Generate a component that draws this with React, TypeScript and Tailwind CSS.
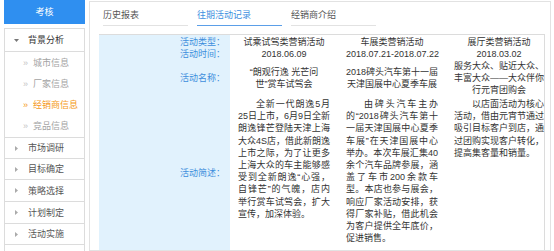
import React from 'react';

type Activity = {
  type: string;
  date: string;
  name: string[];
  desc: string[];
};

const activities: Activity[] = [
  {
    type: '试乘试驾类营销活动',
    date: '2018.06.09',
    name: ['“朗观行逸 光芒问', '世”赏车试驾会'],
    desc: [
      '全新一代朗逸5月',
      '25日上市，6月9日全新',
      '朗逸锋芒登陆天津上海',
      '大众4S店，借此新朗逸',
      '上市之际，为了让更多',
      '上海大众的车主能够感',
      '受到全新朗逸“心强，',
      '自锋芒”的气魄，店内',
      '举行赏车试驾会，扩大',
      '宣传，加深体验。',
    ],
  },
  {
    type: '车展类营销活动',
    date: '2018.07.21-2018.07.22',
    name: ['2018碑头汽车第十一届', '天津国展中心夏季车展'],
    desc: [
      '由碑头汽车主办',
      '的“2018碑头汽车第十',
      '一届天津国展中心夏季',
      '车展”在天津国展中心',
      '举办。本次车展汇集40',
      '余个汽车品牌参展，涵',
      '盖了车市200余款车',
      '型。本店也参与展会，',
      '响应厂家活动安排，获',
      '得厂家补贴，借此机会',
      '为客户提供全年底价，',
      '促进销售。',
    ],
  },
  {
    type: '展厅类营销活动',
    date: '2018.03.02',
    name: ['服务大众、贴近大众、', '丰富大众——大众伴你', '行元宵团购会'],
    desc: [
      '以店面活动为核心',
      '活动，借由元宵节通过',
      '吸引目标客户到店，通',
      '过团购实现客户转化，',
      '提高集客量和销量。',
    ],
  },
];

const subItems = ['城市信息', '厂家信息', '经销商信息', '竞品信息'];
// row heights tuned against the screenshot
const sections: [string, string][] = [
  ['市场调研', 'h-[21px]'],
  ['目标确定', 'h-[21px]'],
  ['策略选择', 'h-[22px]'],
  ['计划制定', 'h-[22px]'],
  ['活动实施', 'h-[21px]'],
];

function Sidebar(): React.ReactElement {
  return (
    <aside className="ml-[4px] flex w-[81px] shrink-0 flex-col">
      <div className="flex h-[24px] items-center justify-center bg-[#2f8ff0] text-white">考核</div>
      <div className="mt-[4px] flex-1 border-x border-t border-[#dcdcdc]">
        <div className="flex h-[23px] items-center border-b border-[#dcdcdc] pl-[9px] text-[#333]">
          <svg width="5" height="3" viewBox="0 0 5 3">
            <path d="M0 0h5L2.5 3z" fill="#777" />
          </svg>
          <span className="ml-[9px]">背景分析</span>
        </div>
        <div className="pb-[1px]">
          {subItems.map((item) => {
            const active = item === '经销商信息';
            return (
              <div
                key={item}
                className={`flex h-[21px] items-center pl-[18px] ${active ? 'text-[#f59a1b]' : 'text-[#a3a3a3]'}`}
              >
                <span className={active ? 'text-[#f59a1b]' : 'text-[#c4c4c4]'}>»</span>
                <span className="ml-[5px]">{item}</span>
              </div>
            );
          })}
        </div>
        {sections.map(([label, h]) => (
          <div key={label} className={`flex ${h} items-center border-t border-[#dcdcdc] pl-[10px] text-[#555]`}>
            <svg width="3" height="5" viewBox="0 0 3 5">
              <path d="M0 0l3 2.5L0 5z" fill="#aaa" />
            </svg>
            <span className="ml-[10px]">{label}</span>
          </div>
        ))}
        <div className="border-t border-[#dcdcdc]" />
      </div>
    </aside>
  );
}

function Tabs(): React.ReactElement {
  const tabs = ['历史报表', '往期活动记录', '经销商介绍'];
  return (
    <div className="flex gap-[9px] pl-[13px]">
      {tabs.map((t, i) => (
        <div
          key={t}
          className={`flex h-[24px] w-[85px] items-center border-b pt-[2px] ${
            i === 1 ? 'border-[#5b9fe8] text-[#3d8fe0]' : 'border-[#e2e2e2] text-[#555]'
          }`}
        >
          {t}
        </div>
      ))}
    </div>
  );
}

function DescLines({ lines }: { lines: string[] }): React.ReactElement {
  return (
    <div className="leading-[12.2px] text-[#333]">
      {lines.map((l, i) => {
        const last = i === lines.length - 1;
        return (
          <div
            key={i}
            className={`whitespace-nowrap ${i === 0 ? 'indent-[2em]' : ''} ${
              last ? 'text-left' : 'text-justify [text-align-last:justify]'
            }`}
          >
            {l}
          </div>
        );
      })}
    </div>
  );
}

export default function App(): React.ReactElement {
  const pad = ['px-[8px]', 'px-[8px]', 'pl-[8px] pr-[3px]'];
  const label = 'bg-[#e1f2fd] pr-[5px] text-right text-[#3d8edc]';
  return (
    <div className="flex h-[251px] w-[554px] overflow-hidden bg-white font-['Liberation_Sans','Noto_Sans_CJK_SC',sans-serif] text-[9px] leading-[12px]">
      <Sidebar />
      <main className="ml-[4px] mt-[1px] flex w-[462px] flex-col border border-[#e2e2e2]">
        <Tabs />
        <div className="ml-[9px] mt-[8px] grid w-[446px] flex-1 grid-cols-[131px_108px_108px_1fr] grid-rows-[13px_12px_36px_1fr] border-r border-t border-[#dcdcdc]">
          <div className={`${label} pt-[1px]`}>活动类型：</div>
          {activities.map((a, i) => (
            <div key={a.type} className={`${pad[i]} whitespace-nowrap pt-[1px] text-center text-[#333]`}>
              {a.type}
            </div>
          ))}

          <div className={label}>活动时间：</div>
          {activities.map((a, i) => (
            <div key={a.date} className={`${pad[i]} whitespace-nowrap text-center text-[#333]`}>
              {a.date}
            </div>
          ))}

          <div className={`${label} flex items-center justify-end`}>活动名称：</div>
          {activities.map((a, i) => (
            <div key={a.name[0]} className={`${pad[i]} flex flex-col justify-center text-center text-[#333]`}>
              {a.name.map((n) => (
                <div key={n} className="whitespace-nowrap">
                  {n}
                </div>
              ))}
            </div>
          ))}

          <div className={`${label} flex items-center justify-end`}>活动简述：</div>
          {activities.map((a, i) => (
            <div key={a.desc[0]} className={`${pad[i]} pt-[2px]`}>
              <DescLines lines={a.desc} />
            </div>
          ))}
        </div>
      </main>
    </div>
  );
}
